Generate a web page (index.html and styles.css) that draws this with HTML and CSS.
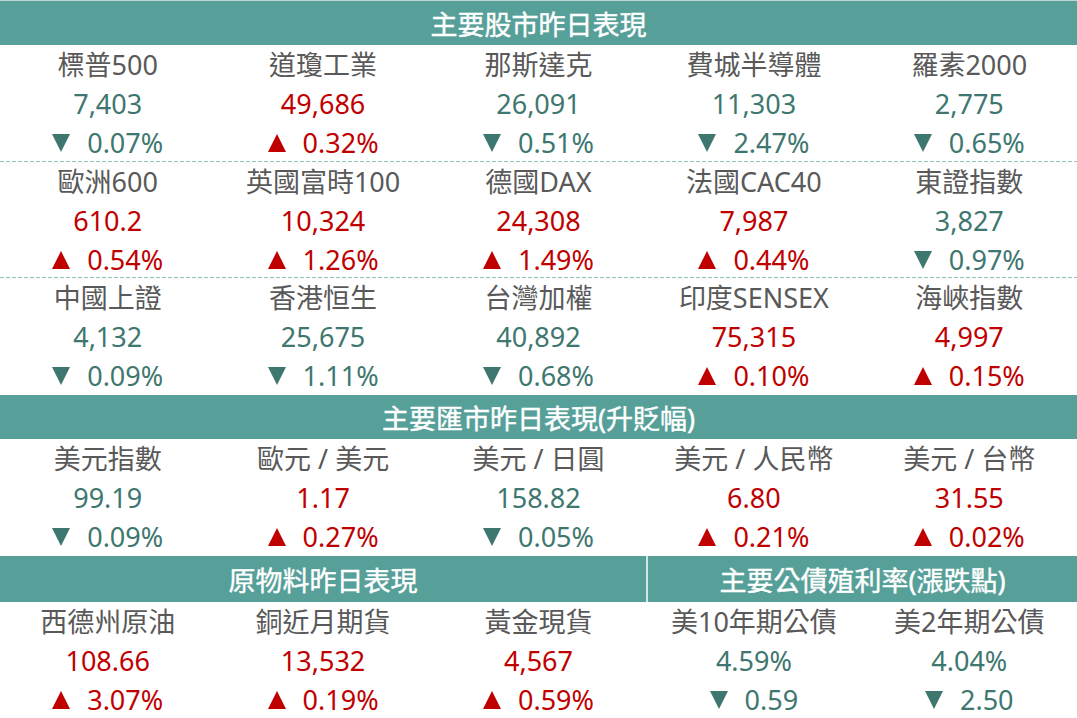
FILE: index.html
```html
<!DOCTYPE html>
<html lang="zh-Hant">
<head>
<meta charset="utf-8">
<title>市場表現</title>
<link rel="stylesheet" href="styles.css">
</head>
<body>
<div class="board">
  <div class="hdr h1">主要股市昨日表現</div>
  <div class="block b1">
    <div class="cell"><div class="name">標普500</div><div class="val dn">7,403</div><div class="chg dn"><i class="tri down"></i>0.07%</div></div>
    <div class="cell"><div class="name">道瓊工業</div><div class="val up">49,686</div><div class="chg up"><i class="tri upt"></i>0.32%</div></div>
    <div class="cell"><div class="name">那斯達克</div><div class="val dn">26,091</div><div class="chg dn"><i class="tri down"></i>0.51%</div></div>
    <div class="cell"><div class="name">費城半導體</div><div class="val dn">11,303</div><div class="chg dn"><i class="tri down"></i>2.47%</div></div>
    <div class="cell"><div class="name">羅素2000</div><div class="val dn">2,775</div><div class="chg dn"><i class="tri down"></i>0.65%</div></div>
  </div>
  <div class="sep"></div>
  <div class="block b2">
    <div class="cell"><div class="name">歐洲600</div><div class="val up">610.2</div><div class="chg up"><i class="tri upt"></i>0.54%</div></div>
    <div class="cell"><div class="name">英國富時100</div><div class="val up">10,324</div><div class="chg up"><i class="tri upt"></i>1.26%</div></div>
    <div class="cell"><div class="name">德國DAX</div><div class="val up">24,308</div><div class="chg up"><i class="tri upt"></i>1.49%</div></div>
    <div class="cell"><div class="name">法國CAC40</div><div class="val up">7,987</div><div class="chg up"><i class="tri upt"></i>0.44%</div></div>
    <div class="cell"><div class="name">東證指數</div><div class="val dn">3,827</div><div class="chg dn"><i class="tri down"></i>0.97%</div></div>
  </div>
  <div class="sep"></div>
  <div class="block b3">
    <div class="cell"><div class="name">中國上證</div><div class="val dn">4,132</div><div class="chg dn"><i class="tri down"></i>0.09%</div></div>
    <div class="cell"><div class="name">香港恒生</div><div class="val dn">25,675</div><div class="chg dn"><i class="tri down"></i>1.11%</div></div>
    <div class="cell"><div class="name">台灣加權</div><div class="val dn">40,892</div><div class="chg dn"><i class="tri down"></i>0.68%</div></div>
    <div class="cell"><div class="name">印度SENSEX</div><div class="val up">75,315</div><div class="chg up"><i class="tri upt"></i>0.10%</div></div>
    <div class="cell"><div class="name">海峽指數</div><div class="val up">4,997</div><div class="chg up"><i class="tri upt"></i>0.15%</div></div>
  </div>
  <div class="hdr h2">主要匯市昨日表現(升貶幅)</div>
  <div class="block b4">
    <div class="cell"><div class="name">美元指數</div><div class="val dn">99.19</div><div class="chg dn"><i class="tri down"></i>0.09%</div></div>
    <div class="cell"><div class="name">歐元 / 美元</div><div class="val up">1.17</div><div class="chg up"><i class="tri upt"></i>0.27%</div></div>
    <div class="cell"><div class="name">美元 / 日圓</div><div class="val dn">158.82</div><div class="chg dn"><i class="tri down"></i>0.05%</div></div>
    <div class="cell"><div class="name">美元 / 人民幣</div><div class="val up">6.80</div><div class="chg up"><i class="tri upt"></i>0.21%</div></div>
    <div class="cell"><div class="name">美元 / 台幣</div><div class="val up">31.55</div><div class="chg up"><i class="tri upt"></i>0.02%</div></div>
  </div>
  <div class="hrow">
    <div class="hdr h3a">原物料昨日表現</div>
    <div class="hdr h3b">主要公債殖利率(漲跌點)</div>
  </div>
  <div class="block b5">
    <div class="cell"><div class="name">西德州原油</div><div class="val up">108.66</div><div class="chg up"><i class="tri upt"></i>3.07%</div></div>
    <div class="cell"><div class="name">銅近月期貨</div><div class="val up">13,532</div><div class="chg up"><i class="tri upt"></i>0.19%</div></div>
    <div class="cell"><div class="name">黃金現貨</div><div class="val up">4,567</div><div class="chg up"><i class="tri upt"></i>0.59%</div></div>
    <div class="cell"><div class="name">美10年期公債</div><div class="val dn">4.59%</div><div class="chg dn"><i class="tri down"></i>0.59</div></div>
    <div class="cell"><div class="name">美2年期公債</div><div class="val dn">4.04%</div><div class="chg dn"><i class="tri down"></i>2.50</div></div>
  </div>
</div>
</body>
</html>
```

FILE: styles.css
```css
* { box-sizing: border-box; margin: 0; padding: 0; }
html, body { background: #ffffff; }
body {
  width: 1077px;
  height: 718px;
  overflow: hidden;
  font-family: "Noto Sans", "Noto Sans CJK TC", sans-serif;
  font-size: 27px;
}
.board { width: 1077px; }
.hdr {
  background: #57a099;
  color: #ffffff;
  text-align: center;
  font-family: "Noto Sans", "Noto Sans CJK TC", sans-serif;
  font-weight: 400;
  font-size: 27px;
  -webkit-text-stroke: 0.4px #ffffff;
  display: flex;
  align-items: center;
  justify-content: center;
}
.h1 { height: 45px; border-top: 1px solid #bcd9d5; }
.h2 { height: 44px; }
.hrow {
  display: grid;
  grid-template-columns: 3fr 2fr;
  height: 46px;
}
.h3b { border-left: 2px solid #cfe7e4; }
.block {
  display: grid;
  grid-template-columns: repeat(5, 1fr);
}
.b1 { height: 116px; }
.b2 { height: 115px; }
.b3 { height: 117px; }
.b4 { height: 117px; }
.b5 { height: 116px; }
.sep {
  height: 1px;
  background: repeating-linear-gradient(to right, #8ec3bd 0 4px, transparent 4px 6px);
}
.cell {
  display: flex;
  flex-direction: column;
  align-items: center;
}
.cell > div {
  height: 39px;
  line-height: 39px;
  white-space: nowrap;
}
.name { color: #595959; }
.dn { color: #3e776f; }
.up { color: #c00000; }
.chg {
  display: flex;
  align-items: center;
  gap: 17px;
}
.tri {
  display: block;
  width: 0;
  height: 0;
  border-left: 9.5px solid transparent;
  border-right: 9.5px solid transparent;
}
.tri.down { border-top: 18px solid #3e776f; }
.tri.upt { border-bottom: 18px solid #c00000; }
```
